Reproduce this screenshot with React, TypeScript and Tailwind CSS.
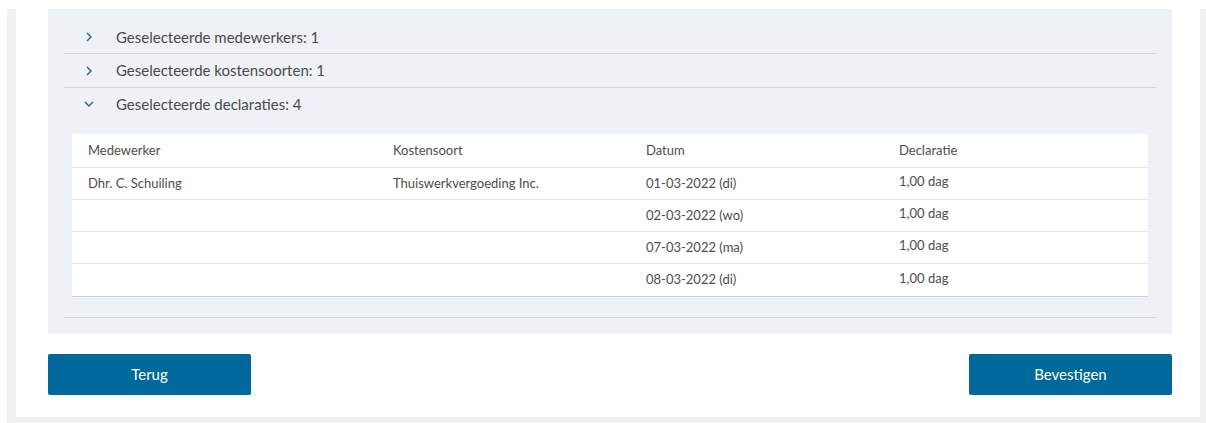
import React from "react";

const font = { fontFamily: "Lato, 'Noto Sans', sans-serif" };

function ChevronRight() {
  return (
    <svg width="10" height="12" viewBox="0 0 10 12" className="shrink-0">
      <path d="M3 2 L7 6 L3 10" fill="none" stroke="#2a5f9a" strokeWidth="1.4" />
    </svg>
  );
}

function ChevronDown() {
  return (
    <svg width="12" height="10" viewBox="0 0 12 10" className="shrink-0">
      <path d="M2 3 L6 7 L10 3" fill="none" stroke="#2a5f9a" strokeWidth="1.4" />
    </svg>
  );
}

type Row = { medewerker: string; kostensoort: string; datum: string; declaratie: string };

const rows: Row[] = [
  { medewerker: "Dhr. C. Schuiling", kostensoort: "Thuiswerkvergoeding Inc.", datum: "01-03-2022 (di)", declaratie: "1,00 dag" },
  { medewerker: "", kostensoort: "", datum: "02-03-2022 (wo)", declaratie: "1,00 dag" },
  { medewerker: "", kostensoort: "", datum: "07-03-2022 (ma)", declaratie: "1,00 dag" },
  { medewerker: "", kostensoort: "", datum: "08-03-2022 (di)", declaratie: "1,00 dag" },
];

const cols = "grid grid-cols-[305px_253px_253px_1fr]";

export default function App() {
  return (
    <div className="min-h-[423px] bg-white pt-[9px] pl-[7px]" style={font}>
      <div className="bg-[#f1f1f1] pl-[9px] pr-[6px] pb-[7px]">
        <div className="bg-white pl-[32px] pr-[28px] pb-[22px]">
          <div className="bg-[#eef2f6] px-[16px] pt-[12px] pb-[16px]">
            {/* collapsed sections */}
            <div className="flex h-[33px] items-center border-b border-[#d2d5d8] pl-[20px]">
              <ChevronRight />
              <span className="ml-[22px] text-[15px] text-[#4a4a4a]">Geselecteerde medewerkers: 1</span>
            </div>
            <div className="flex h-[34px] items-center border-b border-[#d2d5d8] pl-[20px]">
              <ChevronRight />
              <span className="ml-[22px] text-[15px] text-[#4a4a4a]">Geselecteerde kostensoorten: 1</span>
            </div>
            {/* expanded section */}
            <div className="border-b border-[#d2d5d8] pb-[20px]">
              <div className="flex h-[32px] items-center pl-[19px]">
                <ChevronDown />
                <span className="ml-[21px] text-[15px] text-[#4a4a4a]">Geselecteerde declaraties: 4</span>
              </div>
              <div className="mx-[8px] mt-[14px] bg-white border-b border-[#cfcfcf] text-[13px] text-[#4d4d4d]">
                <div className={`${cols} h-[34px] items-center border-b border-[#e4e4e4] px-[16px]`}>
                  <span>Medewerker</span>
                  <span>Kostensoort</span>
                  <span>Datum</span>
                  <span>Declaratie</span>
                </div>
                {rows.map((r, i) => (
                  <div
                    key={i}
                    className={`${cols} h-[32px] items-center px-[16px] ${i < rows.length - 1 ? "border-b border-[#e4e4e4]" : ""}`}
                  >
                    <span>{r.medewerker}</span>
                    <span>{r.kostensoort}</span>
                    <span>{r.datum}</span>
                    <span className="-mt-[3px]">{r.declaratie}</span>
                  </div>
                ))}
              </div>
            </div>
          </div>
          {/* actions */}
          <div className="mt-[20px] flex justify-between">
            <button className="h-[41px] w-[203px] rounded-[2px] bg-[#00689a] text-[15px] text-white">Terug</button>
            <button className="h-[41px] w-[203px] rounded-[2px] bg-[#00689a] text-[15px] text-white">Bevestigen</button>
          </div>
        </div>
      </div>
    </div>
  );
}
